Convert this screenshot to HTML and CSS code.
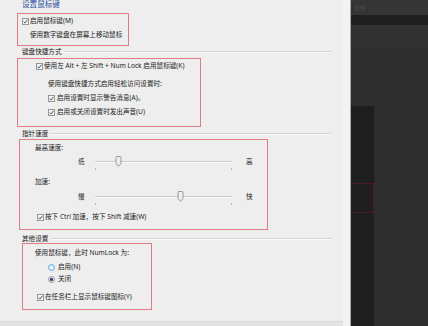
FILE: index.html
```html
<!DOCTYPE html>
<html lang="zh-CN">
<head>
<meta charset="utf-8">
<title>设置鼠标键</title>
<link rel="stylesheet" href="styles.css">
</head>
<body>
<div class="screen">
  <div class="dialog">
    <div class="title">设置鼠标键</div>

    <div class="box box1">
      <div class="row">
        <span class="cb"><svg viewBox="0 0 8 8" width="7" height="7"><rect x="0.5" y="0.5" width="7" height="7" fill="#f4f4f4" stroke="#8c8c8c"/><path d="M1.8 4.2 L3.4 5.8 L6.3 2" fill="none" stroke="#3d5277" stroke-width="1.1"/></svg></span>
        <span>启用鼠标键(M)</span>
      </div>
      <div class="row"><span>使用数字键盘在屏幕上移动鼠标</span></div>
    </div>

    <div class="group"><span class="glabel">键盘快捷方式</span><span class="gline"></span></div>

    <div class="box box2">
      <div class="row ind-a">
        <span class="cb"><svg viewBox="0 0 8 8" width="7" height="7"><rect x="0.5" y="0.5" width="7" height="7" fill="#f4f4f4" stroke="#8c8c8c"/><path d="M1.8 4.2 L3.4 5.8 L6.3 2" fill="none" stroke="#3d5277" stroke-width="1.1"/></svg></span>
        <span>使用左 Alt + 左 Shift + Num Lock 启用鼠标键(K)</span>
      </div>
      <div class="row ind-b gap4"><span>使用键盘快捷方式启用轻松访问设置时:</span></div>
      <div class="row ind-b">
        <span class="cb"><svg viewBox="0 0 8 8" width="7" height="7"><rect x="0.5" y="0.5" width="7" height="7" fill="#f4f4f4" stroke="#8c8c8c"/><path d="M1.8 4.2 L3.4 5.8 L6.3 2" fill="none" stroke="#3d5277" stroke-width="1.1"/></svg></span>
        <span>启用设置时显示警告消息(A)。</span>
      </div>
      <div class="row ind-b">
        <span class="cb"><svg viewBox="0 0 8 8" width="7" height="7"><rect x="0.5" y="0.5" width="7" height="7" fill="#f4f4f4" stroke="#8c8c8c"/><path d="M1.8 4.2 L3.4 5.8 L6.3 2" fill="none" stroke="#3d5277" stroke-width="1.1"/></svg></span>
        <span>启用或关闭设置时发出声音(U)</span>
      </div>
    </div>

    <div class="group g2"><span class="glabel">指针速度</span><span class="gline"></span></div>

    <div class="box box3">
      <div class="row ind-c"><span>最高速度:</span></div>
      <div class="row slider">
        <span class="slabel">低</span>
        <span class="track"><span class="thumb" style="left:20px"><svg viewBox="0 0 7 11" width="7" height="11"><path d="M1 1.5 Q1 0.5 2 0.5 H5 Q6 0.5 6 1.5 V7.5 L3.5 10.3 L1 7.5 Z" fill="#eceff2" stroke="#8e8e8e" stroke-width="0.9"/></svg></span><span class="tick t0"></span><span class="tick t1"></span></span>
        <span class="slabel right">高</span>
      </div>
      <div class="row ind-c gap6"><span>加速:</span></div>
      <div class="row slider gap1">
        <span class="slabel">慢</span>
        <span class="track"><span class="thumb" style="left:82px"><svg viewBox="0 0 7 11" width="7" height="11"><path d="M1 1.5 Q1 0.5 2 0.5 H5 Q6 0.5 6 1.5 V7.5 L3.5 10.3 L1 7.5 Z" fill="#eceff2" stroke="#8e8e8e" stroke-width="0.9"/></svg></span><span class="tick t0"></span><span class="tick t1"></span></span>
        <span class="slabel right">快</span>
      </div>
      <div class="row ind-d gap6">
        <span class="cb"><svg viewBox="0 0 8 8" width="7" height="7"><rect x="0.5" y="0.5" width="7" height="7" fill="#f4f4f4" stroke="#8c8c8c"/><path d="M1.8 4.2 L3.4 5.8 L6.3 2" fill="none" stroke="#3d5277" stroke-width="1.1"/></svg></span>
        <span>按下 Ctrl 加速，按下 Shift 减速(W)</span>
      </div>
    </div>

    <div class="group g3"><span class="glabel">其他设置</span><span class="gline"></span></div>

    <div class="box box4">
      <div class="row ind-e"><span>使用鼠标键，此时 NumLock 为:</span></div>
      <div class="row small ind-f gap1">
        <span class="rb"><svg viewBox="0 0 7 7" width="7" height="7"><circle cx="3.5" cy="3.5" r="3" fill="#cfe6f7" stroke="#5fa8dc" stroke-width="0.9"/><circle cx="3.5" cy="3.5" r="1.6" fill="#e9f4fc"/></svg></span>
        <span>启用(N)</span>
      </div>
      <div class="row small ind-f">
        <span class="rb"><svg viewBox="0 0 7 7" width="7" height="7"><circle cx="3.5" cy="3.5" r="3" fill="#f0f0f0" stroke="#8c8c8c" stroke-width="0.9"/><circle cx="3.5" cy="3.5" r="1.7" fill="#2f4c7a"/></svg></span>
        <span>关闭</span>
      </div>
      <div class="row ind-g gap5">
        <span class="cb"><svg viewBox="0 0 8 8" width="7" height="7"><rect x="0.5" y="0.5" width="7" height="7" fill="#f4f4f4" stroke="#8c8c8c"/><path d="M1.8 4.2 L3.4 5.8 L6.3 2" fill="none" stroke="#3d5277" stroke-width="1.1"/></svg></span>
        <span>在任务栏上显示鼠标键图标(Y)</span>
      </div>
    </div>

    <div class="bottombar"></div>
  </div>
  <div class="edge"></div>
  <div class="dark">
    <div class="d1"><span class="dtext">文件</span></div>
    <div class="d2"></div>
    <div class="d3"></div>
    <div class="d4">
      <div class="strip"><div class="redmark"></div></div>
    </div>
  </div>
</div>
</body>
</html>
```

FILE: styles.css
```css
html, body {
  margin: 0;
  padding: 0;
}
body {
  width: 428px;
  height: 326px;
  overflow: hidden;
  font-family: "Noto Sans", "Noto Sans CJK SC", sans-serif;
  color: #222;
}
.screen {
  display: flex;
  width: 428px;
  height: 326px;
}
.dialog {
  width: 343px;
  height: 326px;
  background: #eeeeee;
  display: flex;
  flex-direction: column;
  overflow: hidden;
}
.title {
  padding-left: 22px;
  height: 8px;
  line-height: 8px;
  font-size: 7.6px;
  color: #2c4f9e;
  white-space: nowrap;
}
.box {
  box-sizing: border-box;
  border: 1px solid #e07c84;
  display: flex;
  flex-direction: column;
}
.row {
  height: 14px;
  display: flex;
  align-items: center;
  font-size: 6.6px;
  line-height: 14px;
  white-space: nowrap;
}
.row.small { height: 12px; line-height: 12px; }
.gap1 { margin-top: 1px; }
.gap4 { margin-top: 4px; }
.gap5 { margin-top: 5px; }
.gap6 { margin-top: 6px; }
.cb, .rb {
  display: flex;
  width: 7px;
  height: 7px;
  margin-right: 1px;
}
.rb { margin-right: 0; width: 7px; }

.box1 {
  margin-top: 5px;
  margin-left: 17px;
  width: 112px;
  padding: 0 0 3px 4px;
}
.box1 .row:nth-child(2) { padding-left: 8px; }

.group {
  display: flex;
  align-items: center;
  height: 10px;
  padding-left: 22px;
  padding-right: 12px;
  font-size: 6.6px;
  white-space: nowrap;
}
.glabel { margin-right: 3px; }
.gline {
  flex: 1;
  height: 1px;
  margin-top: 2px;
  background: #d3d3d3;
  border-bottom: 1px solid #fafafa;
}
.g2 { margin-top: 1px; }
.g3 { margin-top: 3px; }

.box2 {
  margin-top: 2px;
  margin-left: 17px;
  width: 184px;
  padding: 0 0 7px 0;
}
.ind-a { padding-left: 18px; }
.ind-b { padding-left: 30px; }
.ind-b .cb { margin-right: 2px; }

.box3 {
  margin-top: 1px;
  margin-left: 19px;
  width: 249px;
  padding: 1px 0 5px 0;
}
.ind-c { padding-left: 15px; }
.slider { padding-left: 58px; }
.slabel { width: 7px; }
.slabel.right { margin-left: 14px; }
.track {
  position: relative;
  margin-left: 10px;
  width: 137px;
  height: 1px;
  background: #c9c9c9;
  border-bottom: 1px solid #fbfbfb;
}
.thumb {
  position: absolute;
  top: -5px;
  display: flex;
}
.tick {
  position: absolute;
  top: 7px;
  width: 1px;
  height: 2px;
  background: #b8b8b8;
}
.t0 { left: 0; }
.t1 { right: 0; }
.ind-d { padding-left: 17px; }

.box4 {
  margin-left: 22px;
  width: 130px;
  padding: 2px 0 5px 0;
}
.ind-e { padding-left: 12px; }
.ind-f { padding-left: 25px; }
.ind-f span:last-child { margin-left: 3px; }
.ind-g { padding-left: 14px; }

.bottombar {
  margin-top: auto;
  height: 4px;
  background: #e4e4e4;
  border-top: 1px solid #d8d8d8;
}

.edge {
  width: 8px;
  height: 326px;
  background: #f3f3f3;
  border-right: 1px solid #a8a8a8;
  box-sizing: border-box;
}
.dark {
  width: 77px;
  height: 326px;
  background: #2e2e2e;
  display: flex;
  flex-direction: column;
}
.d1 {
  height: 15px;
  background: #353535;
  display: flex;
  align-items: center;
  padding-left: 3px;
}
.dtext {
  font-size: 6px;
  color: #4c4c4c;
  font-family: "Noto Sans CJK SC", sans-serif;
}
.d2 { height: 10px; background: #1f1f1f; }
.d3 { height: 23px; background: #313131; }
.d4 {
  flex: 1;
  background: #2d2d2d;
  display: flex;
}
.strip {
  margin-top: 58px;
  width: 23px;
  background: #1e1e1e;
  display: flex;
  flex-direction: column;
}
.redmark {
  margin-top: 77px;
  height: 30px;
  box-sizing: border-box;
  border: 1px solid #4a1c20;
  border-left: none;
}
```
